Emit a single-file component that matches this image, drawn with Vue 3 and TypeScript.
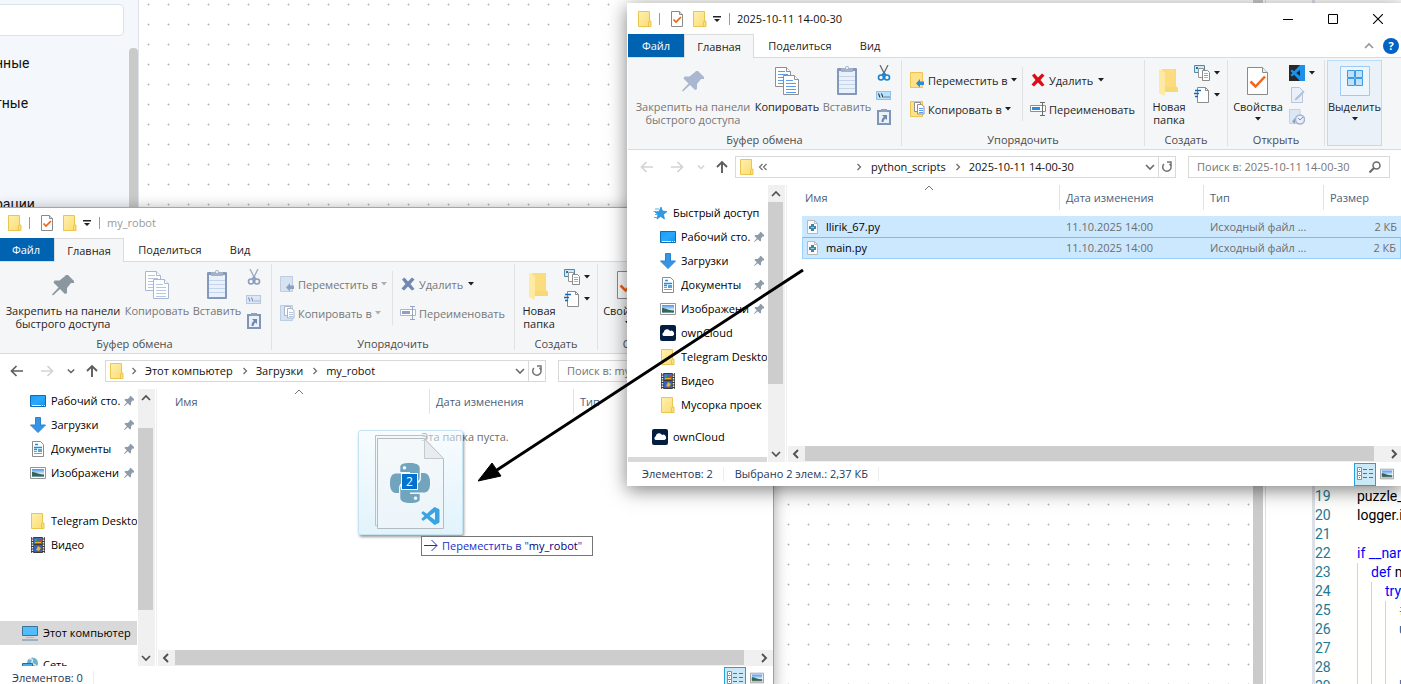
<script setup lang="ts">
interface NavItem {
  icon: string
  label: string
  top?: boolean
  pinned?: boolean
  selected?: boolean
  space?: string
}
interface FileRow {
  name: string
  date: string
  kind: string
  size: string
}
interface ExplorerWindow {
  id: string
  title: string
  active: boolean
  crumbs: string[]
  nav: NavItem[]
  files: FileRow[]
  status: string[]
}

const windows: ExplorerWindow[] = [
  {
    id: 'target',
    title: 'my_robot',
    active: false,
    crumbs: ['Этот компьютер', 'Загрузки', 'my_robot'],
    nav: [
      { icon: 'desktop', label: 'Рабочий сто.', pinned: true },
      { icon: 'download', label: 'Загрузки', pinned: true },
      { icon: 'document', label: 'Документы', pinned: true },
      { icon: 'picture', label: 'Изображени', pinned: true },
      { icon: 'folder', label: 'Telegram Deskto', space: 'gap-row' },
      { icon: 'video', label: 'Видео' },
      { icon: 'computer', label: 'Этот компьютер', top: true, selected: true, space: 'gap-large' },
      { icon: 'network', label: 'Сеть', top: true, space: 'gap-small' },
    ],
    files: [],
    status: ['Элементов: 0'],
  },
  {
    id: 'source',
    title: '2025-10-11 14-00-30',
    active: true,
    crumbs: ['python_scripts', '2025-10-11 14-00-30'],
    nav: [
      { icon: 'star', label: 'Быстрый доступ', top: true, space: 'gap-top' },
      { icon: 'desktop', label: 'Рабочий сто.', pinned: true },
      { icon: 'download', label: 'Загрузки', pinned: true },
      { icon: 'document', label: 'Документы', pinned: true },
      { icon: 'picture', label: 'Изображени', pinned: true },
      { icon: 'cloud', label: 'ownCloud' },
      { icon: 'folder', label: 'Telegram Deskto' },
      { icon: 'video', label: 'Видео' },
      { icon: 'folder', label: 'Мусорка проек' },
      { icon: 'cloud', label: 'ownCloud', top: true, space: 'gap-small' },
      { icon: '', label: '', top: true, selected: true, space: 'gap-small' },
    ],
    files: [
      { name: 'llirik_67.py', date: '11.10.2025 14:00', kind: 'Исходный файл ...', size: '2 КБ' },
      { name: 'main.py', date: '11.10.2025 14:00', kind: 'Исходный файл ...', size: '2 КБ' },
    ],
    status: ['Элементов: 2', 'Выбрано 2 элем.: 2,37 КБ'],
  },
]

const blockMenu: string[] = ['нные', 'тные', 'рации']

interface CodeLine {
  no: number
  depth: number
  keyword?: string
  text?: string
  tone?: string
}
const code: CodeLine[] = [
  { no: 19, depth: 0, text: 'puzzle_' },
  { no: 20, depth: 0, text: 'logger.i' },
  { no: 21, depth: 0 },
  { no: 22, depth: 0, keyword: 'if', text: ' __nar', tone: 'kw' },
  { no: 23, depth: 1, keyword: 'def', text: ' m' },
  { no: 24, depth: 2, keyword: 'try' },
  { no: 25, depth: 3, text: '#', tone: 'comment' },
  { no: 26, depth: 3, text: 'u', tone: 'name' },
  { no: 27, depth: 3 },
  { no: 28, depth: 3 },
  { no: 29, depth: 3, text: 'l', tone: 'name' },
]
</script>

<template>
  <div class="desktop">
    <svg class="defs" aria-hidden="true">
      <defs>
        <linearGradient id="gFolder" x1="0" y1="0" x2="1" y2="1"><stop offset="0" stop-color="#fff0ad" /><stop offset="1" stop-color="#fbdc72" /></linearGradient>
        <linearGradient id="gSky" x1="0" y1="0" x2="0" y2="1"><stop offset="0" stop-color="#4c93ee" /><stop offset=".6" stop-color="#d9edf8" /><stop offset="1" stop-color="#5d8a92" /></linearGradient>
        <linearGradient id="gScreen" x1="0" y1="0" x2="1" y2="1"><stop offset="0" stop-color="#1c9bf2" /><stop offset=".5" stop-color="#2aa9ff" /><stop offset="1" stop-color="#0f92ee" /></linearGradient>
      </defs>
      <symbol id="folder" viewBox="0 0 16 16">
        <path d="M1.5.5h11v9.500h1.500v5.500h-12.500z" fill="url(#gFolder)" stroke="#eac54f" />
        <path d="M11.500 15v-4l1-1" fill="none" stroke="#eac54f" />
      </symbol>
      <symbol id="doccheck" viewBox="0 0 16 16">
        <path d="M2.500.5h8l3 3v12h-11z" fill="#fff" stroke="#8a8a8a" /><path d="M10.500.5v3h3" fill="#ddd" stroke="#8a8a8a" />
        <path d="M4.500 8.500l2.500 2.500 5-5" fill="none" stroke="#f0601c" stroke-width="1.700" />
      </symbol>
      <symbol id="qat" viewBox="0 0 8 8"><path d="M0 1h8v1.500H0zM1 4h6L4 7z" fill="#222" /></symbol>
      <symbol id="caret" viewBox="0 0 6 4"><path d="M0 0h6L3 3.500z" fill="currentColor" /></symbol>
      <symbol id="pin" viewBox="0 0 32 32">
        <path d="M19 6l2 0 6 6 0 2-3 0-4 5 0 5-2 1-5-5-7 6.500-1-1 6.500-7-5-5 1-2 5 0 5-4z" fill="currentColor" />
      </symbol>
      <symbol id="pinned" viewBox="0 0 12 12">
        <path d="M7 1h1l3 3v1.500H9.500L8 7.500v2.500l-1 .5-2.200-2.200L1.500 11 1 10.500l2.800-3.300L1.500 5 2 4h2.500L6.500 2.500z" fill="#8e9ba8" />
      </symbol>
      <symbol id="copy" viewBox="0 0 32 32">
        <path d="M4.500 2.500h11l4 4v15h-15z" fill="#fff" class="sheet" /><path d="M15.500 2.500v4h4" class="sheet" fill="#fff" />
        <path d="M7 6.500h7M7 9.500h10M7 12.500h7M7 15.500h6M7 18.500h6" class="lines" fill="none" />
        <path d="M12.500 10.500h11l4 4v15h-15z" fill="#fff" class="sheet" /><path d="M23.500 10.500v4h4" class="sheet" fill="#fff" />
        <path d="M15 15.500h7M15 18.500h10M15 21.500h10M15 24.500h10M15 27.500h10" class="lines" fill="none" />
      </symbol>
      <symbol id="paste" viewBox="0 0 32 32">
        <rect x="6" y="3" width="20" height="27" rx="1" fill="#8398bb" /><rect x="8" y="6" width="16" height="22" fill="#eaf1fa" />
        <path d="M8 11.500h16M8 15.500h16M8 19.500h16M8 23.500h16" stroke="#c4d4ea" />
        <path d="M10 3h4a2 2 0 0 1 4 0h4v4H10z" fill="#a3b2c9" /><circle cx="16" cy="3" r="1" fill="#fff" />
      </symbol>
      <symbol id="cut" viewBox="0 0 16 16">
        <path d="M4 0l5.500 11M12 0L6.500 11" class="beam" stroke-width="1.300" fill="none" />
        <circle cx="5" cy="12.500" r="2.500" fill="none" class="blade" /><circle cx="11" cy="12.500" r="2.500" fill="none" class="blade" />
        <path d="M6 10l2-2 2 2" fill="none" class="blade" />
      </symbol>
      <symbol id="path" viewBox="0 0 16 16">
        <rect x=".5" y="4.500" width="14" height="8" class="pathbox" /><path d="M2.500 6.500l1.500 4M5.500 6.500l1.500 4M8.500 10h1M10.500 10h1M12.500 10h1" class="pathink" fill="none" />
      </symbol>
      <symbol id="shortcut" viewBox="0 0 16 16">
        <path d="M2 2h12v13H2z" fill="#eaf1fb" stroke="#8195b7" stroke-width="2" /><path d="M5 0h6v3H5z" fill="#8fa1bf" />
        <path d="M6 6h5v5L9.500 9.500Q7.500 10.500 7.500 13H5.500Q5.500 9 8 8z" fill="#6f86ae" />
      </symbol>
      <symbol id="moveto" viewBox="0 0 16 16">
        <path d="M1.500.5h12v15h-12z" class="fold" /><path d="M15 9.500h-4V7L7 11.500l4 4V13h4z" class="arrow" />
      </symbol>
      <symbol id="copyto" viewBox="0 0 16 16">
        <path d="M1.500.5h12v15h-12z" class="fold" />
        <path d="M5.500 1.500h6v9h-6z" fill="#fff" class="sheet" /><path d="M8.500 3.500h4l2.500 2v7.500h-6.500z" fill="#fff" class="sheet" />
        <path d="M10 7.500h4M10 9.500h4M10 11.500h4" class="lines" fill="none" />
      </symbol>
      <symbol id="delete" viewBox="0 0 16 16">
        <path d="M2 3.500L4.500 1.500 8 5.500 12 1.500 14.500 3.500 10.500 8l4 5-2.500 1.500L8 10.500 4 14.500 1.500 12.500 5.500 8z" class="cross" />
      </symbol>
      <symbol id="rename" viewBox="0 0 16 16">
        <path d="M.5 4.500h15v6H.5z" fill="#fff" class="sheet" /><path d="M2 6h8v3H2z" class="arrow" />
        <path d="M10 1.500h5M10 14.500h5M12.500 1.500v13" fill="none" class="beam" />
      </symbol>
      <symbol id="newfolder" viewBox="0 0 32 32">
        <path d="M9 4h14v17l2 2v4H11z" fill="#f8d775" /><path d="M6 4l6 3v22l-1 2-5-3z" fill="#ffeaa4" /><path d="M8 4h14l1 18H12V7z" fill="#fbdc7e" />
      </symbol>
      <symbol id="newitem" viewBox="0 0 16 16">
        <path d="M.5.5h10v7H.5z" fill="#cdeafd" stroke="#5186a5" /><path d="M2 2h2v2H2z" fill="#26769f" />
        <path d="M4.500 3.500h5v9h-5z" fill="#fff" stroke="#969696" /><path d="M8.500 5.500h5l2 2v8h-7z" fill="#fff" stroke="#8b8b8b" />
        <path d="M10 8.500h4M10 12.500h4" stroke="#92b9e4" /><path d="M10 10.500h4" stroke="#f07a7a" />
      </symbol>
      <symbol id="easy" viewBox="0 0 16 16">
        <path d="M3.500.5h8l3 3v12h-11z" fill="#fff" stroke="#8b8b8b" /><path d="M11.500.5v3h3" fill="none" stroke="#8b8b8b" />
        <path d="M1 3.500h6M0 6.500h5M1 9.500h3" stroke="#1667b1" stroke-width="1.300" />
      </symbol>
      <symbol id="props" viewBox="0 0 32 32">
        <path d="M5.500 2.500h15l5 5v22h-20z" fill="#fff" stroke="#8a8a8a" /><path d="M20.500 2.500v5h5" fill="#eee" stroke="#8a8a8a" />
        <path d="M8.500 16.500l5 5 9.500-10" fill="none" stroke="#f4631e" stroke-width="2.500" />
      </symbol>
      <symbol id="code" viewBox="0 0 24 24">
        <path d="M23.150 2.587L18.210.21a1.494 1.494 0 0 0-1.705.29l-9.460 8.630-4.120-3.128a.999.999 0 0 0-1.276.057L.327 7.261A1 1 0 0 0 .326 8.740L3.899 12 .326 15.260a1 1 0 0 0 .001 1.479L1.650 17.940a.999.999 0 0 0 1.276.057l4.120-3.128 9.460 8.630a1.492 1.492 0 0 0 1.704.29l4.942-2.377A1.500 1.500 0 0 0 24 20.060V3.939a1.500 1.500 0 0 0-.85-1.352zm-5.146 14.861L10.826 12l7.178-5.448v10.896z" fill="#3aa4e2" />
      </symbol>
      <symbol id="codebox" viewBox="0 0 16 16"><path d="M0 0h16v16H0z" fill="#24292e" /><path d="M11 0h5v16h-5L1.500 6l1.500-1.500 8 6.500V5L3 11.500 1.500 10z" fill="#1e90e8" /></symbol>
      <symbol id="edit" viewBox="0 0 16 16">
        <path d="M2.500.5h8l3 3v12h-11z" fill="#eaf0fa" stroke="#b8c5dc" /><path d="M14.500 3.500L6.500 11l-1 2.500 3-1 7-7.500z" fill="#b2c0d8" />
      </symbol>
      <symbol id="history" viewBox="0 0 16 16">
        <path d="M.5.500h10.500v14H.5z" fill="#dde6f4" stroke="#c6d1e5" /><circle cx="11" cy="10.500" r="4.500" fill="#e9effa" stroke="#a5b4cf" stroke-width="1.500" />
        <path d="M9 9l2 2 3-3" fill="none" stroke="#7f92b5" /><path d="M3 12.500L6 9v6z" fill="#8fa1c1" />
      </symbol>
      <symbol id="selectall" viewBox="0 0 32 32">
        <path d="M1.500 1.500h29v29h-29z" fill="#eef6fd" stroke="#9ccaf4" /><path d="M8.500 5.500h7v7h-7zM16.500 5.500h7v7h-7zM8.500 13.500h7v7h-7zM16.500 13.500h7v7h-7z" fill="#bfe2fb" stroke="#3c9be2" />
      </symbol>
      <symbol id="back" viewBox="0 0 14 14"><path d="M13 7H2M6.500 2L1.500 7l5 5" fill="none" stroke="currentColor" stroke-width="1.700" /></symbol>
      <symbol id="forward" viewBox="0 0 14 14"><path d="M1 7h11M7.500 2l5 5-5 5" fill="none" stroke="currentColor" stroke-width="1.700" /></symbol>
      <symbol id="droparrow" viewBox="0 0 14 14"><path d="M0 6.500h13M7.500 1l5.500 5.500L7.500 12" fill="none" stroke="currentColor" /></symbol>
      <symbol id="up" viewBox="0 0 14 14"><path d="M7 13V2M2 7l5-5 5 5" fill="none" stroke="currentColor" stroke-width="1.900" /></symbol>
      <symbol id="chevdown" viewBox="0 0 10 10"><path d="M1 3l4 4 4-4" fill="none" stroke="currentColor" stroke-width="1.700" /></symbol>
      <symbol id="chevup" viewBox="0 0 10 10"><path d="M1 7l4-4 4 4" fill="none" stroke="currentColor" stroke-width="1.700" /></symbol>
      <symbol id="chevthin" viewBox="0 0 10 10"><path d="M1 7l4-4 4 4" fill="none" stroke="currentColor" /></symbol>
      <symbol id="chevleft" viewBox="0 0 10 10"><path d="M7 1L3 5l4 4" fill="none" stroke="currentColor" stroke-width="1.900" /></symbol>
      <symbol id="chevright" viewBox="0 0 10 10"><path d="M3 1l4 4-4 4" fill="none" stroke="currentColor" stroke-width="1.900" /></symbol>
      <symbol id="crumb" viewBox="0 0 6 8"><path d="M1.500 1l3 3-3 3" fill="none" stroke="#6e6e6e" stroke-width="1.300" /></symbol>
      <symbol id="more" viewBox="0 0 10 8"><path d="M4.500 1l-3 3 3 3M8.500 1l-3 3 3 3" fill="none" stroke="#6e6e6e" stroke-width="1.200" /></symbol>
      <symbol id="refresh" viewBox="0 0 12 12"><path d="M3 3a4.200 4.200 0 1 0 5.500-.2" fill="none" stroke="#757575" stroke-width="1.500" /><path d="M6 1h4v4" fill="none" stroke="#757575" stroke-width="1.500" /></symbol>
      <symbol id="search" viewBox="0 0 12 12"><circle cx="7.500" cy="4.500" r="3.500" fill="none" stroke="#6a6a6a" stroke-width="1.500" /><path d="M5 7L.5 11.500" stroke="#6a6a6a" stroke-width="2" /></symbol>
      <symbol id="min" viewBox="0 0 10 10"><path d="M0 5.500h10" stroke="#000" /></symbol>
      <symbol id="max" viewBox="0 0 10 10"><path d="M.5.5h9v9h-9z" fill="none" stroke="#000" /></symbol>
      <symbol id="close" viewBox="0 0 10 10"><path d="M0 0l10 10M10 0L0 10" stroke="#000" stroke-width="1.100" /></symbol>
      <symbol id="star" viewBox="0 0 16 16">
        <path d="M9 2l1.500 4 4.500.500-3.500 3 1 4.500-4-2.500L5 14l1-4.500L3 7l4-.500z" fill="#2f9be6" stroke="#1a7cc9" stroke-width=".6" /><path d="M3 4h4M1.500 6.500h3M3 9.500h3M2 12.500h3" stroke="#52b3f0" />
      </symbol>
      <symbol id="desktop" viewBox="0 0 16 16"><path d="M.5 2.500h15v11H.5z" fill="url(#gScreen)" stroke="#0b6eb8" /><path d="M2 12.500h9M12 12.500h1M14 12.500h1" stroke="#fff" /></symbol>
      <symbol id="download" viewBox="0 0 16 16"><path d="M5.500.5h5V8h5L8 15.500.5 8h5z" fill="#3694e4" stroke="#2d83cf" /></symbol>
      <symbol id="document" viewBox="0 0 16 16">
        <path d="M2.500.5h8l3 3v12h-11z" fill="#fff" stroke="#8b8b8b" /><path d="M5 3.500h3M4 6.500h8M4 8.500h3" stroke="#1c8fdd" stroke-width="1.300" /><path d="M8 8h4v3H8z" fill="#51a8d8" /><path d="M4 10.500h3M4 12.500h8" stroke="#999" />
      </symbol>
      <symbol id="picture" viewBox="0 0 16 16"><path d="M.5 2.500h15v11H.5z" fill="#fff" stroke="#949494" /><path d="M2 4h12v8H2z" fill="url(#gSky)" /><path d="M2 7c4 0 6 2.500 12 2.500V11H2z" fill="#34665a" /></symbol>
      <symbol id="cloud" viewBox="0 0 16 16"><rect width="16" height="16" rx="2" fill="#041e42" /><path d="M3.500 11a2 2 0 0 1 .3-3.700A3.300 3.300 0 0 1 10 6a2.500 2.500 0 0 1 2.500 5z" fill="#fff" /></symbol>
      <symbol id="video" viewBox="0 0 16 16">
        <path d="M1 0h14v16H1z" fill="#3b3b3b" /><path d="M2.500 0v16M13.500 0v16" stroke="#e8e8e8" stroke-width="1.500" stroke-dasharray="1.500 1" /><path d="M4 1h8v6H4z" fill="#476cb4" /><path d="M4 8h8v7H4z" fill="#3260c4" /><path d="M5 5h6v1H5zM8 9l3 2-2 3-3-1z" fill="#e9b32f" /><path d="M9 2h2v2H9z" fill="#d93838" /><path d="M5 2h2v2H5z" fill="#3ca35d" />
      </symbol>
      <symbol id="computer" viewBox="0 0 16 16"><path d="M.5 1.500h15v9H.5z" fill="#53bdfb" stroke="#3a7397" /><path d="M4 12.500h8" stroke="#a9bac6" /><path d="M0 15h16" stroke="#7e9bb1" stroke-width="1.300" /></symbol>
      <symbol id="network" viewBox="0 0 16 16"><circle cx="10.500" cy="6" r="5.500" fill="#6fb0d0" /><path d="M7 2c3-1 4 1 3 3s3 2 4 4" stroke="#d5edf5" stroke-width="1.500" fill="none" /><path d="M.5 6.500h10v6H.5z" fill="#41aeea" stroke="#2d6c95" /><path d="M2 14.500h8" stroke="#8096a8" /></symbol>
      <symbol id="python" viewBox="0 0 24 24">
        <path d="M14.250.18l.9.2.73.26.59.3.45.32.34.34.25.34.16.33.1.3.04.26.02.2-.01.13V8.500l-.05.63-.13.55-.21.46-.26.38-.3.31-.33.25-.35.19-.35.14-.33.1-.3.07-.26.04-.21.02H8.770l-.69.05-.59.14-.5.22-.41.27-.33.32-.27.35-.2.36-.15.37-.1.35-.07.32-.04.27-.02.21v3.060H3.170l-.21-.03-.28-.07-.32-.12-.35-.18-.36-.26-.36-.36-.35-.46-.32-.59-.28-.73-.21-.88-.14-1.050-.05-1.230.06-1.220.16-1.040.24-.87.32-.71.36-.57.4-.44.42-.33.42-.24.4-.16.36-.1.32-.05.24-.01h.16l.06.01h8.160v-.83H6.180l-.01-2.750-.02-.37.05-.34.11-.31.17-.28.25-.26.31-.23.38-.2.44-.18.51-.15.58-.12.64-.1.71-.06.77-.04.84-.02 1.270.05zm-6.300 1.980l-.23.33-.08.41.08.41.23.34.33.22.41.09.41-.09.33-.22.23-.34.08-.41-.08-.41-.23-.33-.33-.22-.41-.09-.41.09zm13.090 3.950l.28.06.32.12.35.18.36.27.36.35.35.47.32.59.28.73.21.88.14 1.040.05 1.230-.06 1.230-.16 1.040-.24.86-.32.71-.36.57-.4.45-.42.33-.42.24-.4.16-.36.09-.32.05-.24.02-.16-.01h-8.220v.82h5.840l.01 2.760.02.36-.05.34-.11.31-.17.29-.25.25-.31.24-.38.2-.44.17-.51.15-.58.13-.64.09-.71.07-.77.04-.84.01-1.270-.04-1.070-.14-.9-.2-.73-.25-.59-.3-.45-.33-.34-.34-.25-.34-.16-.33-.1-.3-.04-.25-.02-.2.01-.13v-5.340l.05-.64.13-.54.21-.46.26-.38.3-.32.33-.24.35-.2.35-.14.33-.1.3-.06.26-.04.21-.02.13-.01h5.840l.69-.05.59-.14.5-.21.41-.28.33-.32.27-.35.2-.36.15-.36.1-.35.07-.32.04-.28.02-.21V6.070h2.090l.14.01zm-6.470 14.250l-.23.33-.08.41.08.41.23.33.33.23.41.08.41-.08.33-.23.23-.33.08-.41-.08-.41-.23-.33-.33-.23-.41-.08-.41.08z" fill="currentColor" />
      </symbol>
      <symbol id="pyfile" viewBox="0 0 16 16"><path d="M2.500 1.500h7l3 3v10h-10z" fill="#fafafa" stroke="#b9b9b9" /><path d="M9.500 1.500v3h3" fill="none" stroke="#b9b9b9" /><path d="M6 5h3v2h2v3H9v2H6v-2H4V7h2z" fill="#3f86a6" /><path d="M6 8.500h3" stroke="#a9cbd9" /></symbol>
      <symbol id="list" viewBox="0 0 16 14"><path d="M.5.500h4v4h-4zM.5 4.500h4v4h-4zM.5 8.500h4v4h-4z" fill="#fff" stroke="#8c8c8c" /><path d="M2 2.500h1M2 6.500h1" stroke="#3a90d8" /><path d="M2 10.500h1" stroke="#c33" /><path d="M6 2.500h4M12 2.500h4M6 6.500h4M12 6.500h4M6 10.500h4M12 10.500h4" stroke="#666d73" /></symbol>
    </svg>

    <aside class="blocks">
      <input class="block-search" type="text" aria-label="Поиск блоков" />
      <div class="block-area">
        <ul class="block-menu">
          <li v-for="b in blockMenu" :key="b">{{ b }}</li>
        </ul>
        <div class="block-scroll"></div>
      </div>
    </aside>
    <main class="canvas"></main>
    <div class="canvas-scroll"></div>
    <div class="gutter"></div>
    <section class="editor">
      <div v-for="l in code" :key="l.no" class="line">
        <span class="no">{{ l.no }}</span>
        <i v-for="d in l.depth" :key="d" class="guide"></i>
        <span class="src" :class="l.tone"><span v-if="l.keyword" class="kw">{{ l.keyword }}</span>{{ l.text }}</span>
      </div>
    </section>

    <section v-for="w in windows" :key="w.id" class="window" :class="[w.id, { active: w.active }]">
      <header class="titlebar">
        <svg class="i16"><use href="#folder" /></svg>
        <span class="tsep"></span>
        <button class="bare" aria-label="Свойства"><svg class="i16"><use href="#doccheck" /></svg></button>
        <button class="bare qat-folder" aria-label="Новая папка"><svg class="i16"><use href="#folder" /></svg></button>
        <button class="bare qat" aria-label="Настройка панели"><svg class="i8"><use href="#qat" /></svg></button>
        <span class="tsep"></span>
        <span class="title">{{ w.title }}</span>
        <div v-if="w.active" class="controls">
          <button class="bare" aria-label="Свернуть"><svg class="i10"><use href="#min" /></svg></button>
          <button class="bare" aria-label="Развернуть"><svg class="i10"><use href="#max" /></svg></button>
          <button class="bare" aria-label="Закрыть"><svg class="i10"><use href="#close" /></svg></button>
        </div>
      </header>

      <nav class="tabs">
        <button class="tab file">Файл</button>
        <button class="tab current">Главная</button>
        <button class="tab share">Поделиться</button>
        <button class="tab view">Вид</button>
        <span class="tabs-end">
          <button class="bare collapse" aria-label="Свернуть ленту"><svg class="i10"><use href="#chevup" /></svg></button>
          <button class="bare help" aria-label="Справка">?</button>
        </span>
      </nav>

      <div class="ribbon">
        <div class="group clip">
          <div class="gbody">
            <button class="big pin" :class="{ off: w.active }"><svg class="i32"><use href="#pin" /></svg><span>Закрепить на панели<br />быстрого доступа</span></button>
            <button class="big copy" :class="{ off: !w.active }"><svg class="i32"><use href="#copy" /></svg><span>Копировать</span></button>
            <button class="big paste off"><svg class="i32"><use href="#paste" /></svg><span>Вставить</span></button>
            <div class="smalls" :class="{ off: !w.active }">
              <button class="bare" aria-label="Вырезать"><svg class="i16"><use href="#cut" /></svg></button>
              <button class="bare" aria-label="Скопировать путь"><svg class="i16"><use href="#path" /></svg></button>
              <button class="bare" aria-label="Вставить ярлык"><svg class="i16"><use href="#shortcut" /></svg></button>
            </div>
          </div>
          <div class="glabel">Буфер обмена</div>
        </div>
        <div class="group organize">
          <div class="gbody">
            <div class="rows first" :class="{ off: !w.active }">
              <button class="rowbtn"><svg class="i16"><use href="#moveto" /></svg>Переместить в<svg class="caret"><use href="#caret" /></svg></button>
              <button class="rowbtn"><svg class="i16"><use href="#copyto" /></svg>Копировать в<svg class="caret"><use href="#caret" /></svg></button>
            </div>
            <div class="rows second" :class="{ off: !w.active }">
              <button class="rowbtn"><svg class="i16"><use href="#delete" /></svg>Удалить<svg class="caret dark"><use href="#caret" /></svg></button>
              <button class="rowbtn"><svg class="i16"><use href="#rename" /></svg>Переименовать</button>
            </div>
          </div>
          <div class="glabel">Упорядочить</div>
        </div>
        <div class="group create">
          <div class="gbody">
            <button class="big new"><svg class="i32"><use href="#newfolder" /></svg><span>Новая<br />папка</span></button>
            <div class="smalls">
              <button class="bare drop" aria-label="Создать элемент"><svg class="i16"><use href="#newitem" /></svg><svg class="caret"><use href="#caret" /></svg></button>
              <button class="bare drop" aria-label="Простой доступ"><svg class="i16"><use href="#easy" /></svg><svg class="caret"><use href="#caret" /></svg></button>
            </div>
          </div>
          <div class="glabel">Создать</div>
        </div>
        <div class="group open">
          <div class="gbody">
            <button class="big props"><svg class="i32"><use href="#props" /></svg><span>Свойства</span><svg class="caret"><use href="#caret" /></svg></button>
            <div class="smalls">
              <button class="bare drop" aria-label="Открыть"><svg class="i16"><use href="#codebox" /></svg><svg class="caret"><use href="#caret" /></svg></button>
              <button class="bare" aria-label="Изменить"><svg class="i16"><use href="#edit" /></svg></button>
              <button class="bare" aria-label="Журнал"><svg class="i16"><use href="#history" /></svg></button>
            </div>
          </div>
          <div class="glabel">Открыть</div>
        </div>
        <button class="big select"><svg class="i32"><use href="#selectall" /></svg><span>Выделить</span><svg class="caret"><use href="#caret" /></svg></button>
      </div>

      <div class="addressbar">
        <button class="bare nav-btn" :class="{ dim: w.active }" aria-label="Назад"><svg class="i14"><use href="#back" /></svg></button>
        <button class="bare nav-btn dim" aria-label="Вперёд"><svg class="i14"><use href="#forward" /></svg></button>
        <button class="bare recent" :class="{ dim: w.active }" aria-label="Последние расположения"><svg class="i8"><use href="#chevdown" /></svg></button>
        <button class="bare up" aria-label="Вверх"><svg class="i14"><use href="#up" /></svg></button>
        <div class="address">
          <svg class="i16"><use href="#folder" /></svg>
          <button v-if="w.active" class="bare ancestors" aria-label="Родительские папки"><svg class="more"><use href="#more" /></svg></button>
          <template v-for="c in w.crumbs" :key="c">
            <svg class="crumb-sep"><use href="#crumb" /></svg>
            <a class="crumb" href="#">{{ c }}</a>
          </template>
          <button class="bare addr-drop" aria-label="Предыдущие расположения"><svg class="i10"><use href="#chevdown" /></svg></button>
          <button class="bare reload" aria-label="Обновить"><svg class="i12"><use href="#refresh" /></svg></button>
        </div>
        <label class="search">
          <input type="text" :placeholder="'Поиск в: ' + w.title" aria-label="Поиск" />
          <svg class="i12"><use href="#search" /></svg>
        </label>
      </div>

      <div class="body">
        <nav class="sidebar">
          <a v-for="(n, i) in w.nav" :key="i" href="#" class="node" :class="[n.space, { top: n.top, selected: n.selected }]">
            <svg v-if="n.icon" class="i16"><use :href="'#' + n.icon" /></svg>
            <span class="node-label">{{ n.label }}</span>
            <svg v-if="n.pinned" class="i12"><use href="#pinned" /></svg>
          </a>
        </nav>
        <div class="vscroll">
          <svg class="i10"><use href="#chevup" /></svg>
          <div class="vthumb"></div>
          <svg class="i10"><use href="#chevdown" /></svg>
        </div>
        <div class="content">
          <div class="listing">
            <svg class="sorted"><use href="#chevthin" /></svg>
            <table>
              <thead>
                <tr><th class="c-name">Имя</th><th class="c-date">Дата изменения</th><th class="c-kind">Тип</th><th v-if="w.active" class="c-size">Размер</th><th v-else class="c-size"></th></tr>
              </thead>
              <tbody>
                <tr v-for="f in w.files" :key="f.name">
                  <td class="fname"><span><svg class="i16"><use href="#pyfile" /></svg>{{ f.name }}</span></td>
                  <td>{{ f.date }}</td>
                  <td>{{ f.kind }}</td>
                  <td class="fsize">{{ f.size }}</td>
                </tr>
              </tbody>
            </table>
            <p v-if="!w.files.length" class="empty">Эта папка пуста.</p>
          </div>
          <div class="hscroll">
            <svg class="i10"><use href="#chevleft" /></svg>
            <div class="hthumb"></div>
            <svg class="i10"><use href="#chevright" /></svg>
          </div>
        </div>
      </div>

      <footer class="status">
        <span v-for="s in w.status" :key="s" class="stat">{{ s }}</span>
        <button class="bare mode on" aria-label="Таблица"><svg class="list"><use href="#list" /></svg></button>
        <button class="bare mode" aria-label="Крупные значки"><svg class="i14"><use href="#picture" /></svg></button>
      </footer>
    </section>

    <div class="ghost">
      <svg class="ghost-doc" viewBox="0 0 70 94">
        <path d="M.5.5h49l3 3h-50v87h-2z" fill="#f4f6f8" fill-opacity=".5" stroke="#b9c0c6" />
        <path d="M2.500 3.500h46l20 20v70h-66z" fill="#f3f6f8" fill-opacity=".5" stroke="#b4bbc1" />
        <path d="M49.500 3.500l19 20h-19z" fill="#e2e6e9" fill-opacity=".7" stroke="#c3c9ce" />
      </svg>
      <svg class="ghost-py"><use href="#python" /></svg>
      <svg class="ghost-code"><use href="#code" /></svg>
      <span class="count">2</span>
    </div>
    <div class="droptip"><svg class="i14"><use href="#droparrow" /></svg><span>Переместить в "<b>my_robot</b>"</span></div>
    <svg class="pointer" viewBox="0 0 326 214">
      <path d="M325 2L19 202" stroke="#000" stroke-width="3" /><path d="M0 213L14 195l9 13z" fill="#000" stroke="#000" />
    </svg>
  </div>
</template>

<style>
html, body, #app { height: 100%; }
body { margin: 0; overflow: hidden; }
</style>

<style scoped>
.desktop {
  position: relative; display: flex; height: 100%; min-height: 684px; overflow: hidden;
  font: 11px/16px "Open Sans", "Noto Sans", sans-serif; color: #1e1e1e; background: #fff;
  --sheet: #8f8f8f; --lines: #5c9ceb; --blade: #1884cf; --pathbox: #b9e1fb; --pathedge: #8fc4e8; --pathink: #1b1b1b;
  --fold: #ffe18a; --foldedge: #ecc552; --arrow: #2a8be0; --cross: #dc0d17; --beam: #6b6b6b;
}
.desktop *, .desktop *::before { box-sizing: border-box; }
.defs { position: absolute; width: 0; height: 0; }
svg { display: block; flex: none; }
button { font: inherit; color: inherit; border: 0; background: none; padding: 0; margin: 0; }
a { color: inherit; text-decoration: none; }
.i8 { width: 8px; height: 8px; }
.i10 { width: 10px; height: 10px; }
.i12 { width: 12px; height: 12px; }
.i14 { width: 14px; height: 14px; }
.i16 { width: 16px; height: 16px; }
.i32 { width: 32px; height: 32px; }
.bare { display: flex; align-items: center; justify-content: center; }
.caret { width: 6px; height: 4px; }

/* block palette, canvas and editor */
.blocks { width: 139px; flex: none; display: flex; flex-direction: column; background: #f4f8fc; border-right: 1px solid #dde3e9; font: 14px/20px Roboto, sans-serif; color: #111; }
.block-search { width: 128px; height: 32px; margin: 4px 0 12px -4px; border: 1px solid #dbe4ec; border-radius: 4px; background: #fff; flex: none; }
.block-area { flex: 1; display: flex; justify-content: space-between; }
.block-menu { list-style: none; margin: 5px 0 0 -5px; padding: 0; }
.block-menu li { height: 40px; }
.block-menu li:last-child { margin-top: 61px; }
.block-scroll { width: 9px; background: #cacaca; border-radius: 4px 4px 0 0; }
.canvas {
  flex: 1; background-color: #fff;
  background-image: url("data:image/svg+xml,%3Csvg xmlns='http://www.w3.org/2000/svg' width='20' height='20'%3E%3Cpath d='M8 4.500h3M9.500 3v3' stroke='%23dedede'/%3E%3Cpath d='M9 4.500h1' stroke='%23b4b4b4'/%3E%3C/svg%3E");
}
.canvas-scroll { width: 10px; background: #cbcbcb; }
.gutter { width: 50px; margin-left: 2px; border-left: 1px solid #dcdfe3; border-right: 3px solid #dce1e8; background: #fff; }
.editor { width: 86px; padding-top: 487px; overflow: hidden; background: #fffffe; font: 14px/19px Roboto, sans-serif; color: #000; }
.line { display: flex; height: 19px; white-space: pre; }
.no { width: 42px; flex: none; color: #237893; }
.guide { width: 14px; flex: none; border-left: 1px solid #d3d3d3; }
.kw { color: #0000ff; }
.comment { color: #808000; }
.name { color: #0b5a9c; }

/* explorer windows */
.window { position: absolute; width: 776px; height: 483px; padding-left: 1px; display: flex; flex-direction: column; background: #fff; }
.target { left: -3px; top: 207px; width: 777px; border-top: 1px solid #a5a5a5; border-right: 1px solid #a0a0a0; box-shadow: 0 2px 14px rgba(0, 0, 0, .35); }
.source { left: 627px; top: 3px; box-shadow: 0 4px 18px rgba(0, 0, 0, .5); }
.titlebar { height: 31px; flex: none; display: flex; align-items: center; padding-left: 9px; }
.target .titlebar { height: 30px; }
.tsep { width: 1px; height: 12px; background: #999; }
.titlebar > .i16 + .tsep { margin: 0 9px 0 6px; }
.titlebar .qat-folder { margin-left: 7px; }
.titlebar .qat { margin: 0 8px 0 5px; }
.title { flex: 1; margin-left: 7px; color: #999; }
.active .title { color: #111; }
.controls { display: flex; margin-right: 3px; }
.controls .bare { width: 45px; height: 30px; }
.tabs { height: 24px; flex: none; display: flex; border-bottom: 1px solid #dadbdc; }
.tab { height: 23px; padding: 0; text-align: center; }
.file { width: 56px; background: #0063b1; color: #fff; }
.current { width: 70px; height: 24px; background: #f5f6f7; border: 1px solid #dadbdc; border-bottom: 0; }
.share { width: 92px; }
.view { width: 48px; }
.tabs-end { margin-left: auto; display: flex; align-items: center; gap: 9px; margin-right: 4px; color: #999; }
.help { width: 16px; height: 16px; border-radius: 50%; background: #0063c4; color: #fff; font-weight: 700; }
.ribbon { height: 92px; flex: none; display: flex; background: #f5f6f7; border-bottom: 1px solid #dadbdc; overflow: hidden; line-height: 13px; }
.group { display: flex; flex-direction: column; justify-content: space-between; margin: 2px 0 3px; border-right: 1px solid #dfe1e3; flex: none; }
.clip { width: 274px; }
.organize { width: 243px; }
.create { width: 83px; }
.open { width: 97px; }
.gbody { display: flex; padding-left: 4px; }
.organize .gbody { padding-left: 0; }
.glabel { text-align: center; color: #4b4b4b; }
.big { display: flex; flex-direction: column; align-items: center; padding-top: 5px; white-space: nowrap; text-align: center; flex: none; }
.big span { margin-top: 3px; }
.big .caret { margin-top: 4px; }
.big.pin { width: 122px; color: #1e1e1e; }
.big.pin svg { color: #8b979f; }
.big.pin.off svg { color: #a9b8d0; }
.big.copy { width: 66px; }
.big.paste { width: 54px; }
.big.new { width: 40px; }
.big.props { width: 52px; }
.big.off, .big.pin.off, .rows.off { color: #777; }
.smalls { width: 20px; padding-top: 5px; display: flex; flex-direction: column; align-items: center; gap: 6px; }
.create .smalls, .open .smalls { align-items: flex-start; margin-left: 5px; width: auto; }
.drop { gap: 4px; }
.rows { padding-top: 8px; width: 122px; display: flex; flex-direction: column; gap: 5px; }
.rowbtn { height: 24px; display: flex; align-items: center; gap: 3px; white-space: nowrap; }
.first { padding-left: 7px; background: linear-gradient(#dfe1e3, #dfe1e3) right 7px / 1px 56px no-repeat; }
.second { padding-left: 7px; }
.second .caret { margin-left: 2px; color: #1e1e1e; }
.off .rowbtn .caret { color: #b0b0b0; }
.off .rowbtn .caret.dark { color: #1e1e1e; }
.select { margin: 2px 0 3px 2px; width: 55px; padding-top: 4px; border: 1px solid #bcdcf4; background: #eaf1f8; }
.sheet { stroke: var(--sheet); }
.lines { stroke: var(--lines); }
.blade { stroke: var(--blade); stroke-width: 1.6px; }
.pathbox { fill: var(--pathbox); stroke: var(--pathedge); }
.pathink { stroke: var(--pathink); }
.fold { fill: var(--fold); stroke: var(--foldedge); }
.arrow { fill: var(--arrow); }
.cross { fill: var(--cross); }
.beam { stroke: var(--beam); }
.off {
  --sheet: #a7b7d1; --lines: #b5c6e2; --blade: #8b9dbf; --pathbox: #dce7f6; --pathedge: #b9c8df; --pathink: #6c82a8;
  --fold: #d7e2f2; --foldedge: #bfcde2; --arrow: #8ba0c4; --cross: #7188b0; --beam: #97a8c6;
}

.addressbar { height: 35px; flex: none; display: flex; align-items: center; padding: 0 13px 1px 12px; color: #5e5e5e; }
.nav-btn { width: 14px; margin-right: 16px; }
.recent { margin-left: -4px; width: 10px; }
.up { margin: 0 6px 0 9px; }
.dim { color: #d3d3d3; }
.address { flex: 1; height: 22px; display: flex; align-items: center; border: 1px solid #d9d9d9; color: #111; padding-left: 3px; }
.ancestors { margin: 0 88px 0 3px; }
.more { width: 10px; height: 8px; }
.crumb-sep { width: 6px; height: 8px; margin: 0 8px 0 9px; }
.address > .i16 + .crumb-sep { margin-left: 6px; }
.ancestors + .crumb-sep { margin-left: 0; margin-right: 9px; }
.addr-drop { margin-left: auto; width: 17px; height: 20px; color: #6e6e6e; }
.reload { width: 17px; height: 20px; border-left: 1px solid #d9d9d9; }
.search { width: 202px; height: 22px; margin-left: 12px; display: flex; align-items: center; border: 1px solid #d9d9d9; padding: 0 8px; }
.search input { flex: 1; min-width: 0; border: 0; padding: 0; background: none; font: inherit; outline: 0; }
.search input::placeholder { color: #757575; opacity: 1; }

.body { height: 277px; flex: none; display: flex; }
.sidebar { width: 139px; height: 277px; overflow: hidden; color: #000; }
.node { display: flex; align-items: center; height: 24px; padding: 0 2px 0 32px; gap: 5px; white-space: nowrap; }
.node.top { padding-left: 24px; }
.node-label { flex: 1; min-width: 0; overflow: hidden; margin-right: -3px; }
.selected { background: #d9d9d9; }
.gap-top { margin-top: 16px; }
.gap-small { margin-top: 8px; }
.gap-row { margin-top: 24px; }
.gap-large { margin-top: 64px; }
.vscroll { width: 17px; margin-left: 1px; display: flex; flex-direction: column; align-items: center; padding: 4px 2px 3px 0; background: #f0f0f0; color: #505050; }
.vthumb { width: 15px; height: 182px; background: #cdcdcd; margin: 3px 0 auto; }
.target .vthumb { margin-top: 25px; }
.content { flex: 1; min-width: 0; margin-left: 1px; border-left: 1px solid #efefef; display: flex; flex-direction: column; }
.listing { flex: 1; position: relative; }
.sorted { position: absolute; left: 137px; top: -2px; width: 10px; height: 10px; color: #777; }
table { width: calc(100% - 17px); margin-left: 15px; border-collapse: separate; border-spacing: 0; table-layout: fixed; }
th { height: 31px; padding: 0 0 5px 7px; text-align: left; font-weight: 400; color: #4c607a; background: linear-gradient(#e2e2e2, #e2e2e2) left top / 1px 25px no-repeat; }
th.c-name { width: 257px; padding-left: 3px; background: none; }
.c-date { width: 144px; }
.c-kind { width: 120px; }
td { height: 21px; padding: 0 0 0 7px; background: #cce8ff; color: #6d6d6d; white-space: nowrap; }
tr:last-child td { height: 22px; border-top: 1px solid #75bdf5; border-bottom: 1px solid #99d1ff; }
tr:last-child td:first-child { border-left: 1px solid #99d1ff; padding-left: 2px; }
tr:last-child td:last-child { border-right: 1px solid #99d1ff; }
td.fname { padding-left: 3px; color: #000; }
.fname span { display: flex; align-items: center; gap: 5px; }
td.fsize { text-align: right; padding-right: 4px; }
.empty { margin: 9px 0; text-align: center; color: #6d6d6d; }
.hscroll { height: 16px; margin-left: 1px; display: flex; align-items: center; padding: 0 4px 1px 3px; background: #f0f0f0; color: #505050; }
.hthumb { flex: 1; height: 15px; margin: 0 15px 0 4px; background: #cdcdcd; }
.status { height: 24px; flex: none; display: flex; align-items: center; padding: 0 7px 0 14px; color: #1e395b; }
.stat { padding-right: 10px; margin-right: 11px; border-right: 1px solid #ededed; line-height: 14px; }
.mode { width: 18px; height: 23px; }
.mode.on { width: 22px; margin: 0 2px 0 auto; border: 1px solid #26a0da; background: #cbe8f6; }
.list { width: 16px; height: 14px; }

/* drag feedback */
.ghost { position: absolute; left: 358px; top: 430px; width: 105px; height: 105px; border: 1px solid #c5e4f3; border-radius: 3px; background: linear-gradient(rgba(240, 249, 254, .5), rgba(214, 238, 250, .7)); box-shadow: 1px 2px 3px rgba(0, 0, 0, .4); }
.ghost-doc { position: absolute; left: 16px; top: 4px; width: 70px; height: 94px; }
.ghost-py { position: absolute; left: 31px; top: 32px; width: 40px; height: 40px; color: #72a5bd; }
.ghost-code { position: absolute; left: 62px; top: 76px; width: 19px; height: 18px; }
.count { position: absolute; left: 42px; top: 42px; width: 17px; height: 17px; border: 1px solid #fff; background: #0072cf; color: #fff; font-size: 12px; line-height: 15px; text-align: center; }
.droptip { position: absolute; left: 421px; top: 536px; width: 172px; height: 20px; display: flex; align-items: center; gap: 4px; padding-left: 2px; border: 1px solid #767676; background: #fff; color: #1a2fc8; white-space: nowrap; }
.droptip b { font-weight: 400; color: #000080; }
.pointer { position: absolute; left: 478px; top: 268px; width: 326px; height: 214px; }
</style>
